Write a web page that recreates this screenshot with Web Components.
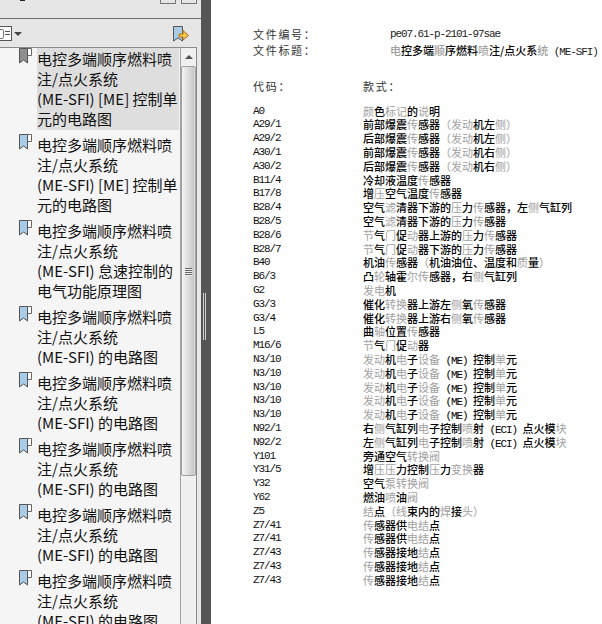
<!DOCTYPE html>
<html><head><meta charset="utf-8"><style>
html,body{margin:0;padding:0;width:602px;height:624px;overflow:hidden;background:#fff}
</style></head><body>
<pdf-app></pdf-app>
<script>
const CJK='"Noto Sans CJK SC","Noto Sans CJK JP",sans-serif';
const BM=`<svg width="13" height="16" viewBox="0 0 13 16" style="display:block"><path d="M8 .5H12.5V7.5H8" fill="#fff" stroke="#666"/><path d="M.5 .5H8.5V15L4.5 12 .5 15Z" fill="COL" stroke="#555"/></svg>`;
class BookmarkItem extends HTMLElement{
 constructor(){super();const g=this.hasAttribute('selected');
 this.attachShadow({mode:'open'}).innerHTML=`<style>
 :host{display:grid;grid-template-columns:18px 142px;padding-left:19px;margin-bottom:4px;flex:none}
 .t{font:15px/20px ${CJK};color:#111;white-space:pre;${g?'background:#dedede;':''}padding:1px 0;box-sizing:border-box;overflow:hidden}
 </style><div>${BM.replace('COL',g?'#8e8e8e':'#a9cbe6')}</div><div class="t"><slot></slot></div>`;}
}
customElements.define('bookmark-item',BookmarkItem);
class ScrollBar extends HTMLElement{
 constructor(){super();this.attachShadow({mode:'open'}).innerHTML=`<style>
 :host{display:flex;flex-direction:column;flex:none;width:16px;background:#f0f0f0;border-left:1px solid #a0a0a0;box-sizing:border-box}
 .u{height:18px;flex:none;display:flex;align-items:center;justify-content:center}
 .u i{border:4px solid transparent;border-bottom:4px solid #505050;border-top:0;display:block}
 .th{height:410px;flex:none;border:1px solid #a0a0a0;border-radius:2px;box-sizing:border-box;background:linear-gradient(90deg,#f4f4f4,#dcdcdc 50%,#c8c8ca 85%,#dedede);display:flex;flex-direction:column;align-items:center;justify-content:center;gap:1px}
 .th b{display:block;width:7px;height:1px;background:#666;box-shadow:0 1px #eee}
 </style><div class="u"><i></i></div><div class="th"><b></b><b></b><b></b><b></b></div>`;}
}
customElements.define('scroll-bar',ScrollBar);
class PanelTools extends HTMLElement{
 constructor(){super();this.attachShadow({mode:'open'}).innerHTML=`<style>
 :host{display:flex;flex:none;height:47px;flex-direction:column;background:#e6e6e6;width:201px}
 .top{height:18px;flex:none;border-bottom:1px solid #6e6e6e;display:flex;align-items:flex-start;box-sizing:content-box;margin-bottom:-1px}
 .bit{width:5px;height:1px;background:#222;margin-left:20px}
 .sp{flex:1}
 .top i{width:14px;height:3px;border:1px solid #777;border-top:0;display:block;margin-right:5px}
 .top i:last-child{margin-right:4px}
 .row{flex:1;display:flex;align-items:center;justify-content:space-between;padding:0 12px 0 0}
 .l{display:flex;align-items:center;gap:1px;margin-top:2px}
 .m{width:11px;height:13px;border:1px solid #555;border-left:0;background:#fff;position:relative;overflow:hidden}
 .m b{position:absolute;left:5px;height:1px;width:5px;background:#555}
 .m u{position:absolute;left:-3px;top:2px;width:5px;height:8px;border:1px solid #777;border-radius:2px}
 .a{border:4px solid transparent;border-top:4px solid #444;border-bottom:0;margin-left:1px}
 </style><div class="top"><div class="bit"></div><div class="sp"></div><i></i><i></i></div><div class="row"><div class="l"><div class="m"><u></u><b style="top:4px"></b><b style="top:7px"></b></div><div class="a"></div></div>
 <svg width="16" height="16" viewBox="0 0 16 16" style="margin-top:2px;display:block"><path d="M.5 .5H9.5V15L5 12 .5 15Z" fill="#a9cbe6" stroke="#555"/><path d="M6 8H10V4.5L15.5 9.5 10 14V11H6Z" fill="#f5c84a" stroke="#a8701c"/></svg></div>`;}
}
customElements.define('panel-tools',PanelTools);
class SidePanel extends HTMLElement{
 constructor(){super();this.attachShadow({mode:'open'}).innerHTML=`<style>
 :host{display:flex;flex-direction:column;width:201px;height:624px;background:#e8e8e8;flex:none}
 .body{flex:1;display:flex;min-height:0;overflow:hidden;width:197px;border-top:1px solid #8a8a8a;border-right:1px solid #8a8a8a;box-sizing:border-box;background:#f5f5f5}
 .list{width:180px;flex:none;overflow:hidden;display:flex;flex-direction:column}
 </style><panel-tools></panel-tools><div class="body"><div class="list"><slot></slot></div><scroll-bar></scroll-bar></div>`;}
}
customElements.define('side-panel',SidePanel);
class SplitBar extends HTMLElement{
 constructor(){super();this.attachShadow({mode:'open'}).innerHTML=`<style>
 :host{display:flex;align-items:center;flex:none;width:10px;height:624px;background:#555;padding-left:2px;box-sizing:border-box}
 .g{width:3px;height:47px;margin-top:8px;background-image:linear-gradient(90deg,#d0d0d0 1px,transparent 1px),linear-gradient(#555 1px,transparent 1px);background-size:2px 2px,2px 2px}
 </style><div class="g"></div>`;}
}
customElements.define('split-bar',SplitBar);
class CodeRow extends HTMLElement{
 constructor(){super();this.attachShadow({mode:'open'}).innerHTML=`<style>
 :host{display:grid;grid-template-columns:110px 1fr;height:13.8px;line-height:13.8px;white-space:nowrap;font-size:11px;font-weight:500;color:#000}
 .c{font:11px/13.8px "Liberation Mono",monospace;letter-spacing:-1.1px;color:#111}
 </style><span class="c"><slot name="code"></slot></span><span><slot></slot></span>`;}
}
customElements.define('code-row',CodeRow);
class DocPage extends HTMLElement{
 constructor(){super();this.attachShadow({mode:'open'}).innerHTML=`<style>
 :host{display:block;flex:1;min-width:0;height:624px;overflow:hidden;background:#fff;padding:26px 0 0 42px;box-sizing:border-box;font:11px/16px ${CJK};color:#333}
 .h{display:grid;grid-template-columns:137px 1fr;white-space:nowrap;height:16px}
 .l{letter-spacing:1.7px}
 .h2{display:grid;grid-template-columns:110px 1fr;margin:20px 0 10.6px;height:16px}
 .m{font:11px/16px "Liberation Mono",monospace;letter-spacing:-1.1px;color:#222}
 .dim{color:#a0a0a0}
 .v{color:#000;font-weight:500}
 </style>
 <div class="h"><span class="l">文件编号：</span><span class="m">pe07.61-p-2101-97sae</span></div>
 <div class="h"><span class="l">文件标题：</span><span class="v"><span class="dim">电</span>控多端<span class="dim">顺</span>序燃料<span class="dim">喷</span>注/点火系<span class="dim">统</span><span class="m"> (ME-SFI)</span></span></div>
 <div class="h2"><span class="l">代码：</span><span class="l">款式：</span></div>
 <slot></slot>`;}
}
customElements.define('doc-page',DocPage);
class PdfApp extends HTMLElement{
 constructor(){super();
 const S1='电控多端顺序燃料喷\n注/点火系统\n';
 const items=[['(ME-SFI) [ME] 控制单\n元的电路图',1],['(ME-SFI) [ME] 控制单\n元的电路图'],['(ME-SFI) 怠速控制的\n电气功能原理图'],['(ME-SFI) 的电路图'],['(ME-SFI) 的电路图'],['(ME-SFI) 的电路图'],['(ME-SFI) 的电路图'],['(ME-SFI) 的电路图']];
 const rows=`A0|颜色标记的说明
A29/1|前部爆震传感器（发动机左侧）
A29/2|后部爆震传感器（发动机左侧）
A30/1|前部爆震传感器（发动机右侧）
A30/2|后部爆震传感器（发动机右侧）
B11/4|冷却液温度传感器
B17/8|增压空气温度传感器
B28/4|空气滤清器下游的压力传感器，左侧气缸列
B28/5|空气滤清器下游的压力传感器
B28/6|节气门促动器上游的压力传感器
B28/7|节气门促动器下游的压力传感器
B40|机油传感器（机油油位、温度和质量）
B6/3|凸轮!轴霍尔传感器，右侧气缸列
G2|发电机
G3/3|催化转换器上游左侧氧传感器
G3/4|催化转换器上游右侧氧传感器
L5|曲轴位置传感器
M16/6|节气门促动器
N3/10|发动机电子设备 (ME) 控制单元
N3/10|发动机电子设备 (ME) 控制单元
N3/10|发动机电子设备 (ME) 控制单元
N3/10|发动机电子设备 (ME) 控制单元
N3/10|发动机电子设备 (ME) 控制单元
N92/1|右侧气缸列电子控制喷射 (ECI) 点火模块
N92/2|左侧气缸列电子控制喷射 (ECI) 点火模块
Y101|旁通空气转换阀
Y31/5|增压压力控制压力变换器
Y32|空气泵转换阀
Y62|燃油喷油阀
Z5|结点（线束内的焊接头）
Z7/41|传感器供电结点
Z7/41|传感器供电结点
Z7/43|传感器接地结点
Z7/43|传感器接地结点
Z7/43|传感器接地结点`.split('\n');
 const dimChars='颜标记说传发动侧压滤节门轮尔质转换喷设备电单块阀泵结线焊头变轴（）';
 const mark=s=>s.replace(/!(.)| ?\([A-Z]+\) ?|./g,(m,k)=>{
   if(k)return k;
   if(m.length>1)return `<span style="font:11px/13.8px 'Liberation Mono',monospace;letter-spacing:-1.1px;white-space:pre">${m}</span>`;
   return dimChars.includes(m)?`<span style="color:#a0a0a0;font-weight:400">${m}</span>`:m;});
 this.attachShadow({mode:'open'}).innerHTML=`<style>
 :host{display:flex;width:602px;height:624px;overflow:hidden;align-items:stretch}
 </style><side-panel>${items.map(([t,s])=>`<bookmark-item ${s?'selected':''}>${S1}${t}</bookmark-item>`).join('')}</side-panel><split-bar></split-bar><doc-page>${rows.map(r=>{const[a,b]=r.split('|');return `<code-row><span slot="code">${a}</span>${mark(b)}</code-row>`}).join('')}</doc-page>`;}
}
customElements.define('pdf-app',PdfApp);
</script>
</body></html>
